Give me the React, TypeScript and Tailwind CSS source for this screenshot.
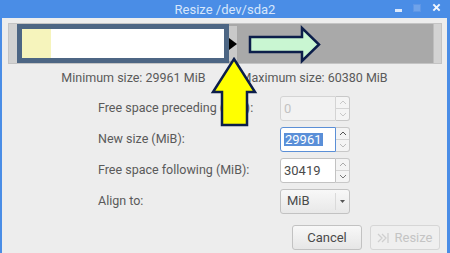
import React from 'react'

const font = { fontFamily: 'Roboto, "Liberation Sans", sans-serif' }

function SpinBox({ value, disabled, focused }: { value: string; disabled?: boolean; focused?: boolean }) {
    return (
        <div className="flex h-[25px]">
            <div
                className={
                    'w-[56px] h-full rounded-l-[3px] border flex items-center pl-[3px] ' +
                    (focused ? 'border-[#5b8fd6] bg-white' : disabled ? 'border-[#d4d4d4] bg-[#f2f2f2]' : 'border-[#c2c2c2] bg-white')
                }
            >
                <span className={'text-[13px] leading-none ' + (focused ? 'bg-[#5a8fd8] text-white px-[1px]' : disabled ? 'text-[#c2c2c2]' : 'text-[#4a4a4a]')}>
                    {value}
                </span>
            </div>
            <div className="w-[14px] h-full flex flex-col border border-l-0 border-[#c8c8c8] rounded-r-[3px] bg-[#f4f4f4]">
                <div className="flex-1 flex items-center justify-center border-b border-[#d4d4d4]">
                    <svg width="8" height="5" viewBox="0 0 8 5"><path d="M1 4 L4 1 L7 4" fill="none" stroke={disabled ? '#c8c8c8' : focused ? '#555' : '#aaa'} strokeWidth="1" /></svg>
                </div>
                <div className="flex-1 flex items-center justify-center">
                    <svg width="8" height="5" viewBox="0 0 8 5"><path d="M1 1 L4 4 L7 1" fill="none" stroke={disabled ? '#c8c8c8' : focused ? '#bbb' : '#777'} strokeWidth="1" /></svg>
                </div>
            </div>
        </div>
    )
}

function Row({ label, children }: { label: string; children: React.ReactNode }) {
    return (
        <div className="flex items-center h-[25px]">
            <div className="w-[182px] text-[12.5px] text-[#5a5a5a]">{label}</div>
            {children}
        </div>
    )
}

export default function App() {
    return (
        <div className="relative w-[450px] h-[253px] overflow-hidden bg-[#4a8de6]" style={font}>
            {/* title bar */}
            <div className="h-[18px] flex items-center relative">
                <div className="flex-1 text-center text-[13px] leading-none text-[#d6e6fb]">Resize /dev/sda2</div>
                <div className="absolute right-[9px] top-[3px] flex items-center gap-[11px]">
                    <div className="w-[7px] h-[3px] bg-[#dbe8fb] mt-[6px]" />
                    <div className="w-[8px] h-[8px] bg-[#6fa3ea] border border-[#5e96e6]" />
                    <svg width="9" height="9" viewBox="0 0 10 10"><path d="M1.5 1.5 L8.5 8.5 M8.5 1.5 L1.5 8.5" stroke="#f2f7fe" strokeWidth="2.2" /></svg>
                </div>
            </div>

            {/* body */}
            <div className="absolute left-[2px] right-[3px] top-[18px] bottom-0 bg-[#ededed]">
                {/* partition bar */}
                <div className="mt-[5px] ml-[6px] w-[434px] h-[41px] bg-[#d2d2d2] border border-[#c4c4c4] flex">
                    <div className="w-[8px]" />
                    <div className="w-[212px] h-[39px] bg-[#4d6684] p-[5px] flex">
                        <div className="w-[29px] h-full bg-[#f6f4bc]" />
                        <div className="flex-1 bg-white" />
                    </div>
                    <div className="w-[9px] bg-[#a8a8a8] flex py-[2px]">
                        <div className="w-[8px] bg-[#c9c9c9] flex items-center">
                            <svg width="8" height="12" viewBox="0 0 8 12"><path d="M0 0 L8 6 L0 12 Z" fill="#000" /></svg>
                        </div>
                    </div>
                    <div className="flex-1 bg-[#a9a9a9]" />
                    <div className="w-[8px] bg-[#d3d3d3] border-l border-[#bdbdbd]" />
                </div>

                {/* min / max */}
                <div className="mt-[8px] flex justify-center gap-[35px] text-[12.5px] text-[#5a5a5a] leading-none">
                    <span>Minimum size: 29961 MiB</span>
                    <span>Maximum size: 60380 MiB</span>
                </div>

                {/* form */}
                <div className="mt-[11px] ml-[96px] flex flex-col gap-[6px]">
                    <Row label="Free space preceding (MiB):">
                        <SpinBox value="0" disabled />
                    </Row>
                    <Row label="New size (MiB):">
                        <SpinBox value="29961" focused />
                    </Row>
                    <Row label="Free space following (MiB):">
                        <SpinBox value="30419" />
                    </Row>
                    <Row label="Align to:">
                        <div className="w-[70px] h-[25px] flex border border-[#c2c2c2] rounded-[3px] bg-gradient-to-b from-[#f8f8f8] to-[#e8e8e8]">
                            <div className="flex-1 flex items-center pl-[6px] text-[13px] text-[#4a4a4a]">MiB</div>
                            <div className="w-[14px] flex items-center justify-center border-l border-[#dadada] my-[3px]">
                                <svg width="5" height="3" viewBox="0 0 5 3"><path d="M0 0 L5 0 L2.5 3 Z" fill="#555" /></svg>
                            </div>
                        </div>
                    </Row>
                </div>

                {/* buttons */}
                <div className="absolute right-[7px] bottom-[3px] flex gap-[8px]">
                    <button className="w-[70px] h-[25px] border border-[#c2c2c2] rounded-[3px] bg-gradient-to-b from-[#f8f8f8] to-[#e6e6e6] text-[13px] text-[#4a4a4a]">Cancel</button>
                    <button className="w-[70px] h-[25px] border border-[#d6d6d6] rounded-[3px] bg-[#efefef] text-[13px] text-[#c4c4c4] flex items-center justify-center gap-[3px]">
                        <svg width="14" height="12" viewBox="0 0 14 12"><path d="M1 2 L5 6 L1 10 M5 2 L9 6 L5 10 M11 1 L11 11" fill="none" stroke="#cfcfcf" strokeWidth="1.3" /></svg>
                        Resize
                    </button>
                </div>
            </div>

            {/* annotation arrows */}
            <svg className="absolute left-0 top-0 pointer-events-none" width="450" height="253" viewBox="0 0 450 253">
                <path d="M250 37 L302 37 L302 28 L319 44.5 L302 61 L302 52 L250 52 Z" fill="#c9f6d2" stroke="#0c1e4a" strokeWidth="2.5" strokeLinejoin="miter" />
                <path d="M234 59 L255 92 L247 92 L247 125 L222 125 L222 92 L213 92 Z" fill="#ffff00" stroke="#0c1e4a" strokeWidth="2.5" strokeLinejoin="miter" />
            </svg>
        </div>
    )
}
